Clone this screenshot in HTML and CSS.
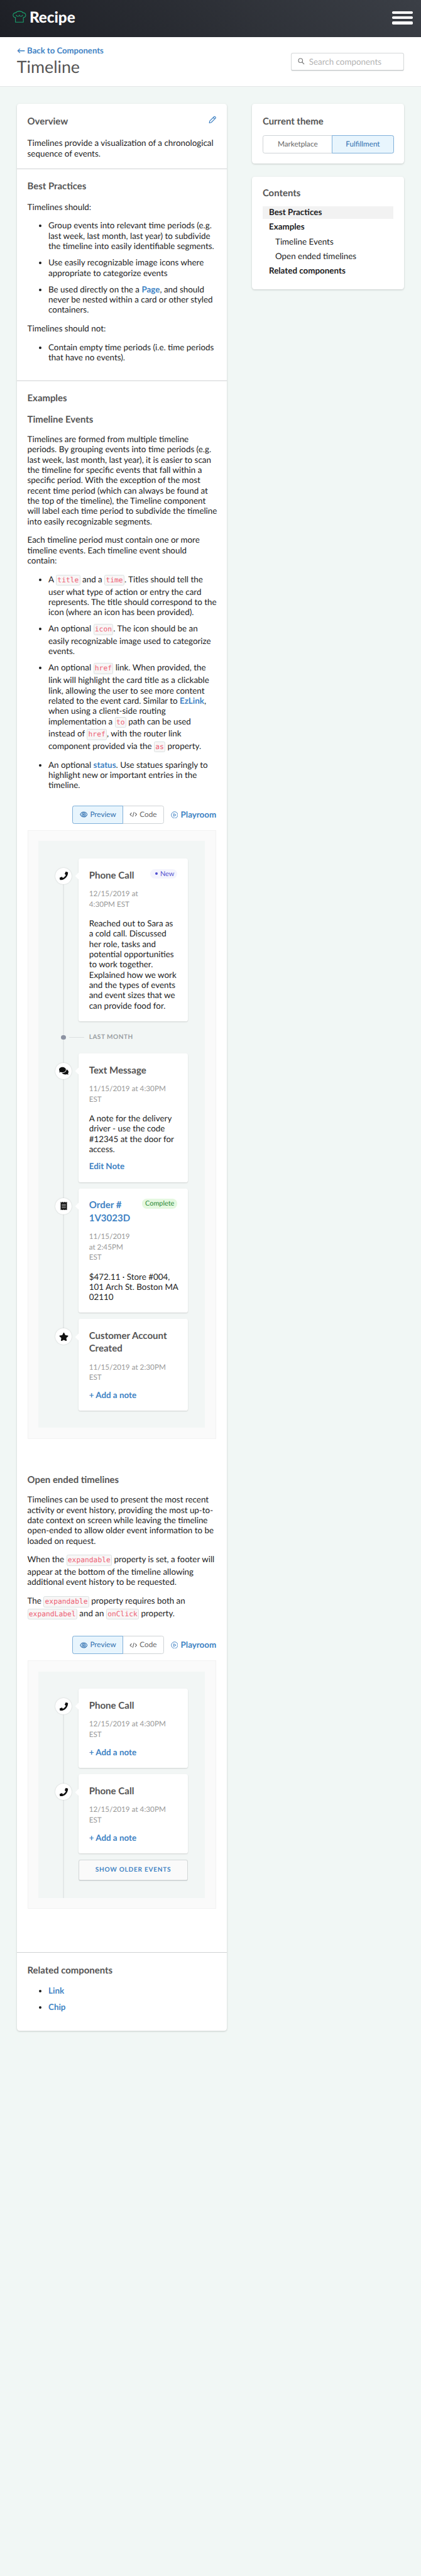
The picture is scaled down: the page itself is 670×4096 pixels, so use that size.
FILE: index.html
```html
<!DOCTYPE html>
<html lang="en">
<head>
<meta charset="utf-8">
<title>Timeline - Recipe</title>
<link rel="stylesheet" href="styles.css">
</head>
<body>
<svg width="0" height="0" class="sprite">
  <symbol id="phone" viewBox="0 0 512 512"><path d="M493.400 24.600l-104-24c-11.300-2.600-22.900 3.300-27.500 13.900l-48 112c-4.200 9.800-1.400 21.300 6.900 28l60.600 49.600c-36 76.700-98.900 140.500-177.200 177.200l-49.600-60.600c-6.800-8.300-18.200-11.100-28-6.900l-112 48C3.900 366.500-2 378.100.6 389.400l24 104C27.100 504.200 36.700 512 48 512c256.100 0 464-207.500 464-464 0-11.200-7.700-20.900-18.600-23.400z"/></symbol>
  <symbol id="comments" viewBox="0 0 576 512"><path d="M416 192c0-88.400-93.100-160-208-160S0 103.600 0 192c0 34.300 14.100 65.900 38 92-13.400 30.200-35.500 54.200-35.800 54.500-2.200 2.300-2.800 5.700-1.500 8.700S4.800 352 8 352c36.600 0 66.900-12.300 88.700-25 32.200 15.700 70.300 25 111.300 25 114.900 0 208-71.600 208-160zm122 220c23.900-26 38-57.700 38-92 0-66.900-53.500-124.200-129.300-148.100.9 6.600 1.300 13.300 1.300 20.100 0 105.900-107.700 192-240 192-10.800 0-21.300-.8-31.700-1.900C207.800 439.600 281.800 480 368 480c41 0 79.100-9.200 111.300-25 21.800 12.700 52.100 25 88.700 25 3.200 0 6.100-1.900 7.300-4.800 1.300-2.900.7-6.300-1.500-8.700-.3-.3-22.400-24.200-35.800-54.500z"/></symbol>
  <symbol id="receipt" viewBox="0 0 384 512"><path d="M358.400 3.200L320 48 265.600 3.200a15.900 15.900 0 0 0-19.200 0L192 48 137.600 3.200a15.900 15.900 0 0 0-19.200 0L64 48 25.600 3.200C15-4.700 0 2.800 0 16v480c0 13.200 15 20.700 25.600 12.800L64 464l54.400 44.800a15.900 15.900 0 0 0 19.200 0L192 464l54.400 44.800a15.900 15.900 0 0 0 19.200 0L320 464l38.400 44.800c10.500 7.900 25.600.4 25.600-12.800V16c0-13.200-15-20.700-25.600-12.800zM320 360c0 4.400-3.600 8-8 8H72c-4.400 0-8-3.600-8-8v-16c0-4.400 3.600-8 8-8h240c4.400 0 8 3.600 8 8v16zm0-96c0 4.400-3.600 8-8 8H72c-4.400 0-8-3.600-8-8v-16c0-4.400 3.600-8 8-8h240c4.400 0 8 3.600 8 8v16zm0-96c0 4.400-3.600 8-8 8H72c-4.400 0-8-3.600-8-8v-16c0-4.400 3.600-8 8-8h240c4.400 0 8 3.600 8 8v16z"/></symbol>
  <symbol id="star" viewBox="0 0 576 512"><path d="M259.300 17.800L194 150.200 47.900 171.500c-26.200 3.800-36.700 36.100-17.700 54.600l105.700 103-25 145.500c-4.500 26.300 23.200 46 46.400 33.700L288 439.600l130.700 68.700c23.200 12.200 50.900-7.400 46.400-33.700l-25-145.500 105.700-103c19-18.500 8.500-50.800-17.700-54.600L382 150.200 316.700 17.800c-11.700-23.600-45.600-23.900-57.400 0z"/></symbol>
  <symbol id="eye" viewBox="0 0 18 14"><g fill="none" stroke="currentColor" stroke-width="1.500"><path d="M1 7C3 3 6 1.300 9 1.300S15 3 17 7c-2 4-5 5.700-8 5.700S3 11 1 7z"/><circle cx="9" cy="7" r="3.600"/><circle cx="9" cy="7" r="1" /></g></symbol>
  <symbol id="code" viewBox="0 0 18 14"><g fill="none" stroke="currentColor" stroke-width="1.600"><path d="M5 3.200L1.500 7 5 10.800M13 3.200L16.500 7 13 10.800M10.600 1.500L7.400 12.500"/></g></symbol>
  <symbol id="play" viewBox="0 0 16 16"><g fill="none" stroke="currentColor" stroke-width="1.300"><circle cx="8" cy="8" r="7"/><path d="M6 5l5.200 3L6 11z"/></g></symbol>
</svg>

<header class="topbar">
  <div class="brand">
    <svg class="brand-mark" viewBox="0 0 26 23"><path d="M5.500 13C2.500 12.500 1 10.500 1 8.300c0-2.600 2.200-4.500 5-4.300C7.500 1.800 10 1 13 1s5.500.8 7 3c2.800-.2 5 1.700 5 4.300 0 2.200-1.500 4.200-4.500 4.700V21.800h-15zM6.500 8c.8 2 2.300 2.800 3.700 2.800 1.300 0 2.300-.8 2.800-2 .5 1.200 1.500 2 2.800 2 1.400 0 2.900-.8 3.700-2.800"/></svg>
    <span>Recipe</span>
  </div>
  <div class="burger"><i></i><i></i><i></i></div>
</header>

<div class="pagehead">
  <div>
    <a class="back">← Back to Components</a>
    <h1>Timeline</h1>
  </div>
  <div class="search"><svg viewBox="0 0 14 14"><circle cx="5.500" cy="5.500" r="4.200"/><path d="M8.700 8.700L13 13"/></svg><span>Search components</span></div>
</div>

<main class="layout">
  <article class="card doc">
    <section class="overview">
      <div class="titlerow"><h2>Overview</h2><svg class="pencil" viewBox="0 0 16 16"><path d="M1.500 14.500L2.300 10.700 10.800 2.200C11.500 1.500 12.500 1.500 13.200 2.200L13.800 2.800C14.500 3.500 14.500 4.500 13.800 5.200L5.300 13.700ZM9.300 3.700L12.300 6.700"/></svg></div>
      <p>Timelines provide a visualization of a chronological sequence of events.</p>
    </section>

    <section class="practices">
      <h2>Best Practices</h2>
      <p>Timelines should:</p>
      <ul>
        <li>Group events into relevant time periods (e.g. last week, last month, last year) to subdivide the timeline into easily identifiable segments.</li>
        <li>Use easily recognizable image icons where appropriate to categorize events</li>
        <li>Be used directly on the a <a>Page</a>, and should never be nested within a card or other styled containers.</li>
      </ul>
      <p>Timelines should not:</p>
      <ul>
        <li>Contain empty time periods (i.e. time periods that have no events).</li>
      </ul>
    </section>

    <section class="examples">
      <h2>Examples</h2>
      <h2>Timeline Events</h2>
      <p>Timelines are formed from multiple timeline periods. By grouping events into time periods (e.g. last week, last month, last year), it is easier to scan the timeline for specific events that fall within a specific period. With the exception of the most recent time period (which can always be found at the top of the timeline), the Timeline component will label each time period to subdivide the timeline into easily recognizable segments.</p>
      <p>Each timeline period must contain one or more timeline events. Each timeline event should contain:</p>
      <ul>
        <li>A <code>title</code> and a <code>time</code>. Titles should tell the user what type of action or entry the card represents. The title should correspond to the icon (where an icon has been provided).</li>
        <li>An optional <code>icon</code>. The icon should be an easily recognizable image used to categorize events.</li>
        <li>An optional <code>href</code> link. When provided, the link will highlight the card title as a clickable link, allowing the user to see more content related to the event card. Similar to <a>EzLink</a>, when using a client-side routing implementation a <code>to</code> path can be used instead of <code>href</code>, with the router link component provided via the <code>as</code> property.</li>
        <li>An optional <a>status</a>. Use statues sparingly to highlight new or important entries in the timeline.</li>
      </ul>

      <div class="toolbar">
        <div class="segmented">
          <span class="on"><svg><use href="#eye"/></svg>Preview</span>
          <span><svg><use href="#code"/></svg>Code</span>
        </div>
        <a class="playroom"><svg><use href="#play"/></svg>Playroom</a>
      </div>
      <div class="preview">
        <div class="canvas">
          <div class="event first">
            <div class="rail"><span class="dot"><svg><use href="#phone"/></svg></span></div>
            <div class="entry">
              <div class="entry-head"><div><h3>Phone Call</h3><time>12/15/2019 at 4:30PM EST</time></div><span class="chip new">New</span></div>
              <p>Reached out to Sara as a cold call. Discussed her role, tasks and potential opportunities to work together. Explained how we work and the types of events and event sizes that we can provide food for.</p>
            </div>
          </div>
          <div class="period"><div class="rail"><span class="pip"></span></div><span class="tick"></span><span>Last month</span></div>
          <div class="event">
            <div class="rail"><span class="dot"><svg><use href="#comments"/></svg></span></div>
            <div class="entry">
              <h3>Text Message</h3><time>11/15/2019 at 4:30PM EST</time>
              <p>A note for the delivery driver - use the code #12345 at the door for access.</p>
              <a class="action">Edit Note</a>
            </div>
          </div>
          <div class="event">
            <div class="rail"><span class="dot"><svg><use href="#receipt"/></svg></span></div>
            <div class="entry">
              <div class="entry-head narrow"><div><h3 class="linked">Order # 1V3023D</h3><time>11/15/2019 at 2:45PM EST</time></div><span class="chip done">Complete</span></div>
              <p>$472.11 · Store #004, 101 Arch St. Boston MA 02110</p>
            </div>
          </div>
          <div class="event last">
            <div class="rail"><span class="dot"><svg><use href="#star"/></svg></span></div>
            <div class="entry">
              <h3>Customer Account Created</h3><time>11/15/2019 at 2:30PM EST</time>
              <a class="action">+ Add a note</a>
            </div>
          </div>
        </div>
      </div>

      <h2 class="open">Open ended timelines</h2>
      <p>Timelines can be used to present the most recent activity or event history, providing the most up-to-date context on screen while leaving the timeline open-ended to allow older event information to be loaded on request.</p>
      <p>When the <code>expandable</code> property is set, a footer will appear at the bottom of the timeline allowing additional event history to be requested.</p>
      <p>The <code>expandable</code> property requires both an <code>expandLabel</code> and an <code>onClick</code> property.</p>

      <div class="toolbar">
        <div class="segmented">
          <span class="on"><svg><use href="#eye"/></svg>Preview</span>
          <span><svg><use href="#code"/></svg>Code</span>
        </div>
        <a class="playroom"><svg><use href="#play"/></svg>Playroom</a>
      </div>
      <div class="preview">
        <div class="canvas">
          <div class="event first">
            <div class="rail"><span class="dot"><svg><use href="#phone"/></svg></span></div>
            <div class="entry">
              <h3>Phone Call</h3><time>12/15/2019 at 4:30PM EST</time>
              <a class="action">+ Add a note</a>
            </div>
          </div>
          <div class="event">
            <div class="rail"><span class="dot"><svg><use href="#phone"/></svg></span></div>
            <div class="entry">
              <h3>Phone Call</h3><time>12/15/2019 at 4:30PM EST</time>
              <a class="action">+ Add a note</a>
            </div>
          </div>
          <div class="event more"><div class="rail"></div><div class="older">Show older events</div></div>
        </div>
      </div>
    </section>

    <section class="related">
      <h2>Related components</h2>
      <ul>
        <li><a>Link</a></li>
        <li><a>Chip</a></li>
      </ul>
    </section>
  </article>

  <aside>
    <div class="card theme">
      <h2>Current theme</h2>
      <div class="segmented wide"><span>Marketplace</span><span class="on">Fulfillment</span></div>
    </div>
    <nav class="card contents">
      <h2>Contents</h2>
      <a class="current">Best Practices</a>
      <a>Examples</a>
      <a class="sub">Timeline Events</a>
      <a class="sub">Open ended timelines</a>
      <a>Related components</a>
    </nav>
  </aside>
</main>
</body>
</html>
```

FILE: styles.css
```css
* { box-sizing: border-box; }
html { background: #f1f7f5; font-size: 8.375px; }
body {
  min-height: 100vh;
  margin: 0;
  color: #1b1c1d;
  font: 1.6rem/1.95rem Lato, sans-serif;
  text-rendering: geometricPrecision;
}
h1, h2, h3, p, ul { margin: 0; padding: 0; }
.sprite { position: absolute; }
a { color: #4183c4; font-weight: 700; }

/* Top bar */
.topbar {
  display: flex;
  align-items: center;
  justify-content: space-between;
  height: 7rem;
  padding: 0 1.5rem 0 2.4rem;
  background: linear-gradient(45deg, #1d1f25, #3b3f46);
}
.brand { display: flex; align-items: center; gap: 0.6rem; margin-top: -0.2rem; color: #fff; font-size: 2.9rem; font-weight: 900; line-height: 3.4rem; }
.brand-mark { width: 2.6rem; height: 2.3rem; margin-top: -0.4rem; fill: none; stroke: #1aa06d; stroke-width: 1.300; }
.burger { display: flex; flex-direction: column; gap: 0.5rem; margin-top: -0.3rem; }
.burger i { width: 4rem; height: 0.5rem; border-radius: 0.2rem; background: #fff; }

/* Page heading */
.pagehead {
  display: flex;
  justify-content: space-between;
  height: 9.5rem;
  padding: 1.6rem 3.2rem 0;
  border-bottom: 0.2rem solid #e4e7e7;
  background: #fff;
}
.back { display: block; font-size: 1.57rem; line-height: 2.1rem; }
h1 { margin-top: 0.1rem; color: #555; font-size: 3.2rem; font-weight: 400; line-height: 3.9rem; }
.search {
  display: flex;
  align-items: center;
  gap: 0.8rem;
  width: 21.5rem;
  height: 3.5rem;
  margin-top: 1.4rem;
  padding: 0 1.2rem;
  border: 1px solid #d5d8d9;
  border-bottom-width: 2px;
  border-radius: 0.4rem;
  color: #b3b3b3;
}
.search svg { width: 1.3rem; height: 1.3rem; fill: none; stroke: #777; stroke-width: 1.500; }

/* Columns and cards */
.layout { display: flex; align-items: flex-start; justify-content: space-between; padding: 3.2rem 3.2rem 0; }
.card { border-radius: 0.5rem; background: #fff; box-shadow: 0 1px 3px rgba(0, 0, 0, 0.18); }
.doc { width: 39.9rem; height: 365.9rem; }
.doc section { padding: 0 2rem; border-bottom: 1px solid #d0d3d4; }
.doc .related { border: 0; }
h2 { color: #555; font-size: 1.78rem; font-weight: 700; line-height: 2.4rem; }
.titlerow { display: flex; justify-content: space-between; align-items: center; margin-bottom: 2rem; }
.pencil { width: 1.5rem; height: 1.5rem; margin-top: -0.6rem; fill: none; stroke: #4183c4; stroke-width: 1.500; stroke-linejoin: round; }
.doc .overview { height: 12.4rem; padding-top: 2.1rem; }
.doc .practices { height: 40.2rem; padding-top: 2.1rem; }
.doc .examples { height: 298.5rem; padding-top: 2.1rem; }
.doc .related { padding-top: 2.1rem; }
.doc section > p { margin-right: -0.3rem; margin-bottom: 1.6rem; }
.practices h2 { margin-bottom: 1.7rem; }
.examples > h2 { margin-bottom: 1.6rem; }
.related h2 { margin-bottom: 1.7rem; }
.doc ul { margin-right: -0.2rem; margin-bottom: 1.6rem; padding-left: 4rem; }
li { margin-bottom: 1.17rem; }
li:last-child { margin-bottom: 0; }
code {
  display: inline-block;
  margin-bottom: 0.16rem;
  padding: 0 0.15rem;
  border: 1px solid #dbe2e2;
  border-radius: 0.3rem;
  background: #f8f6f6;
  color: #ed5f74;
  font: 1.35rem/1.84rem "DejaVu Sans Mono", monospace;
}

/* Segmented controls */
.toolbar { display: flex; align-items: center; justify-content: flex-end; gap: 1.3rem; height: 3.4rem; margin-top: 2.95rem; margin-bottom: 1.2rem; white-space: nowrap; }
.segmented { display: flex; height: 3.4rem; border: 1px solid #cfd3d6; border-radius: 0.4rem; color: #666; font-size: 1.4rem; }
.segmented span { display: flex; align-items: center; justify-content: center; gap: 0.5rem; width: 7.7rem; }
.segmented .on { width: 9.7rem; margin: -1px; border: 1px solid #7fb0da; border-radius: 0.4rem 0 0 0.4rem; background: #e8f5fd; color: #2f70b0; }
.segmented svg { width: 1.5rem; height: 1.2rem; }
.segmented.wide { width: 25rem; }
.segmented.wide span { width: 13.1rem; }
.segmented.wide .on { width: 11.9rem; border-radius: 0 0.4rem 0.4rem 0; }
.playroom { display: flex; align-items: center; gap: 0.5rem; }
.playroom svg { width: 1.4rem; height: 1.4rem; }

/* Timeline preview */
.preview { padding: 2rem; border: 1px solid #f2f2f2; background: #fafafa; }
.canvas { padding: 3.3rem 3.2rem 3.2rem; background: #f2f6f5; }
.event { display: flex; margin-bottom: 1.2rem; }
.event.last, .event.more { margin-bottom: 0; }
.rail { position: relative; display: flex; flex: none; justify-content: center; width: 3.1rem; margin-right: 1.3rem; }
.rail::before { content: ""; position: absolute; top: 0; bottom: -1.2rem; left: 1.45rem; width: 0.2rem; background: #e4e8e8; }
.first .rail::before { top: 3.3rem; }
.last .rail::before { bottom: auto; height: 3.3rem; }
.more .rail::before { bottom: -3.2rem; }
.dot { position: relative; display: flex; align-items: center; justify-content: center; width: 3.1rem; height: 3.1rem; margin-top: 1.8rem; border-radius: 50%; background: #fff; box-shadow: 0 0 2px rgba(0, 0, 0, 0.2); }
.dot svg { width: 1.8rem; height: 1.6rem; fill: #111; }
.entry { position: relative; width: 20.8rem; padding: 2rem; border-radius: 0.4rem; background: #fff; box-shadow: 0 1px 2px rgba(0, 0, 0, 0.15); }
.entry::before { content: ""; position: absolute; top: 2.9rem; left: -0.5rem; width: 1rem; height: 1rem; background: #fff; transform: rotate(45deg); }
.entry h3 { margin-bottom: 1.35rem; color: #555; font-size: 1.8rem; font-weight: 700; line-height: 2.4rem; }
.entry .linked { color: #4183c4; }
.entry-head { display: flex; align-items: flex-start; justify-content: space-between; }
.entry-head div { width: 9.6rem; }
.entry-head.narrow div { width: 8.5rem; }
time { display: block; color: #999; font-size: 1.4rem; line-height: 2rem; }
.entry p { margin-top: 1.6rem; margin-right: -0.2rem; }
.action { display: block; margin-top: 1.3rem; line-height: 2rem; }
.chip { border-radius: 0.9rem; font-size: 1.3rem; line-height: 1.8rem; }
.new { padding: 0 0.6rem 0 0.9rem; background: #f4f4fd; color: #5050d0; }
.new::before { content: ""; display: inline-block; width: 0.5rem; height: 0.5rem; margin: 0 0.5rem 0.2rem 0; border-radius: 50%; background: #5050d0; }
.done { padding: 0 0.6rem; background: #e5f8e0; color: #2c8a38; }
.period { display: flex; align-items: center; height: 6.1rem; margin-top: -1.2rem; color: #999ea2; font-size: 1.2rem; font-weight: 700; letter-spacing: 0.06rem; text-transform: uppercase; }
.period .rail { align-items: center; height: 6.1rem; margin-right: 0; }
.pip { position: relative; width: 0.9rem; height: 0.9rem; border-radius: 50%; background: #8d93a3; }
.tick { width: 2.9rem; height: 1px; margin: 0 0.9rem 0 -0.5rem; background: #dde1e1; }
.examples .open { margin-top: 6.55rem; }
.older { display: flex; align-items: center; justify-content: center; width: 20.8rem; height: 4rem; border: 1px solid #d3d7d8; border-bottom-width: 2px; border-radius: 0.4rem; background: #fafafa; color: #4183c4; font-size: 1.2rem; font-weight: 700; letter-spacing: 0.09rem; text-transform: uppercase; }

/* Sidebar */
aside { display: flex; flex-direction: column; gap: 2.4rem; width: 28.9rem; }
.theme { height: 11.4rem; padding: 2.1rem 2rem; }
.theme h2 { margin-bottom: 1.5rem; }
.contents { height: 21.4rem; padding: 2rem; }
.contents h2 { margin-bottom: 1.3rem; }
.contents a { display: block; height: 2.3rem; margin-bottom: 0.47rem; padding-left: 1.2rem; color: #1b1c1d; font-weight: 700; line-height: 2.3rem; }
.contents .current { background: #f2f2f2; }
.contents .sub { padding-left: 2.4rem; font-weight: 400; }
```
